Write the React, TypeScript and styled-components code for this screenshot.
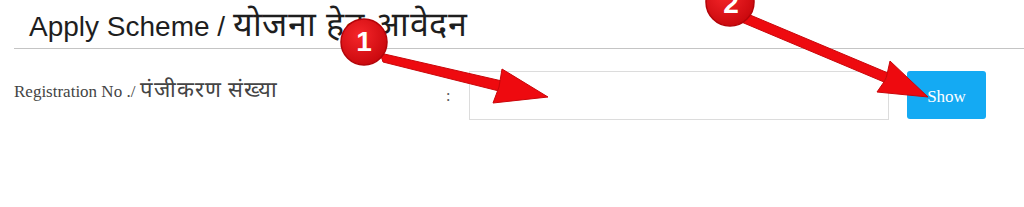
import React from "react";
import styled, { createGlobalStyle } from "styled-components";

const Global = createGlobalStyle`
    body {
        margin: 0;
        background: #fff;
    }
`;

const App = () => {
    const [regNo, setRegNo] = React.useState<string>("");

    return (
        <>
        <Global />
        <Page>
            <Header>
                <Title>Apply Scheme / <Hindi size="34px" spacing="0.5px">योजना हेतु आवेदन</Hindi></Title>
            </Header>
            <FormRow>
                <Label>Registration No ./ <Hindi size="22px" spacing="1px">पंजीकरण संख्या</Hindi></Label>
                <Colon>:</Colon>
                <Input value={regNo} onChange={e => setRegNo(e.target.value)} type="text" />
                <Button>Show</Button>
            </FormRow>
            <Annotations />
        </Page>
        </>
    );
};

// the red numbered arrows drawn over the screenshot
const Annotations = () => (
    <Overlay width="1024" height="207" viewBox="0 0 1024 207">
        <defs>
            <radialGradient id="badge" cx="40%" cy="35%" r="70%">
                <stop offset="0%" stopColor="#f5262a" />
                <stop offset="100%" stopColor="#c8070c" />
            </radialGradient>
        </defs>
        <g fill="#ee0a0f" stroke="#c9060a" strokeWidth="1" strokeLinejoin="round">
            <polygon points="380,53 383,62 499,91 502,81" />
            <polygon points="502,69 548,97 493,103 499,87" />
            <polygon points="743,12 739,21 884,82 888,73" />
            <polygon points="890,61 928,97 877,92 886,79" />
        </g>
        <circle cx="364" cy="42" r="23" fill="url(#badge)" stroke="#b30409" strokeWidth="1.5" />
        <BadgeText x="364" y="51">1</BadgeText>
        <circle cx="730" cy="2" r="24" fill="url(#badge)" stroke="#b30409" strokeWidth="1.5" />
        <BadgeText x="731" y="13">2</BadgeText>
    </Overlay>
);

const Page = styled.div`
    position: relative;
    width: 1024px;
    height: 207px;
    overflow: hidden;
    padding-left: 14px;
    box-sizing: border-box;
`;

const Header = styled.div`
    height: 49px;
    border-bottom: 1px solid #c4c4c4;
    padding-left: 15px;
    box-sizing: border-box;
`;

const Title = styled.h2`
    margin: 0;
    padding-top: 7px;
    font-family: "Liberation Sans", Arial, sans-serif;
    font-weight: 400;
    font-size: 28px;
    line-height: 34px;
    color: #1e1e1e;
    white-space: nowrap;
`;

const Hindi = styled.span<{ size: string; spacing: string }>`
    font-size: ${p => p.size};
    letter-spacing: ${p => p.spacing};
`;

const FormRow = styled.div`
    display: flex;
    align-items: flex-start;
    margin-top: 22px;
`;

const Label = styled.label`
    width: 432px;
    padding-top: 8px;
    font-family: "Liberation Serif", "Times New Roman", serif;
    font-size: 17px;
    line-height: 22px;
    color: #444;
    white-space: nowrap;
`;

const Colon = styled.span`
    width: 23px;
    padding-top: 14px;
    font-family: "Liberation Serif", serif;
    font-size: 16px;
    line-height: 22px;
    color: #555;
`;

const Input = styled.input`
    width: 420px;
    height: 49px;
    box-sizing: border-box;
    border: 1px solid #dcdcdc;
    background: #fff;
    outline: none;
    margin-right: 18px;
    font-size: 16px;
`;

const Button = styled.button`
    width: 79px;
    height: 48px;
    padding-top: 4px;
    border: 0;
    border-radius: 3px;
    background-color: #14aaf3;
    color: #fff;
    font-family: "Liberation Serif", "Times New Roman", serif;
    font-size: 17px;
    cursor: pointer;
`;

const Overlay = styled.svg`
    position: absolute;
    top: 0;
    left: 0;
    pointer-events: none;
`;

const BadgeText = styled.text`
    fill: #fff;
    font-family: "Liberation Sans", Arial, sans-serif;
    font-weight: 700;
    font-size: 28px;
    text-anchor: middle;
`;

export default App;
